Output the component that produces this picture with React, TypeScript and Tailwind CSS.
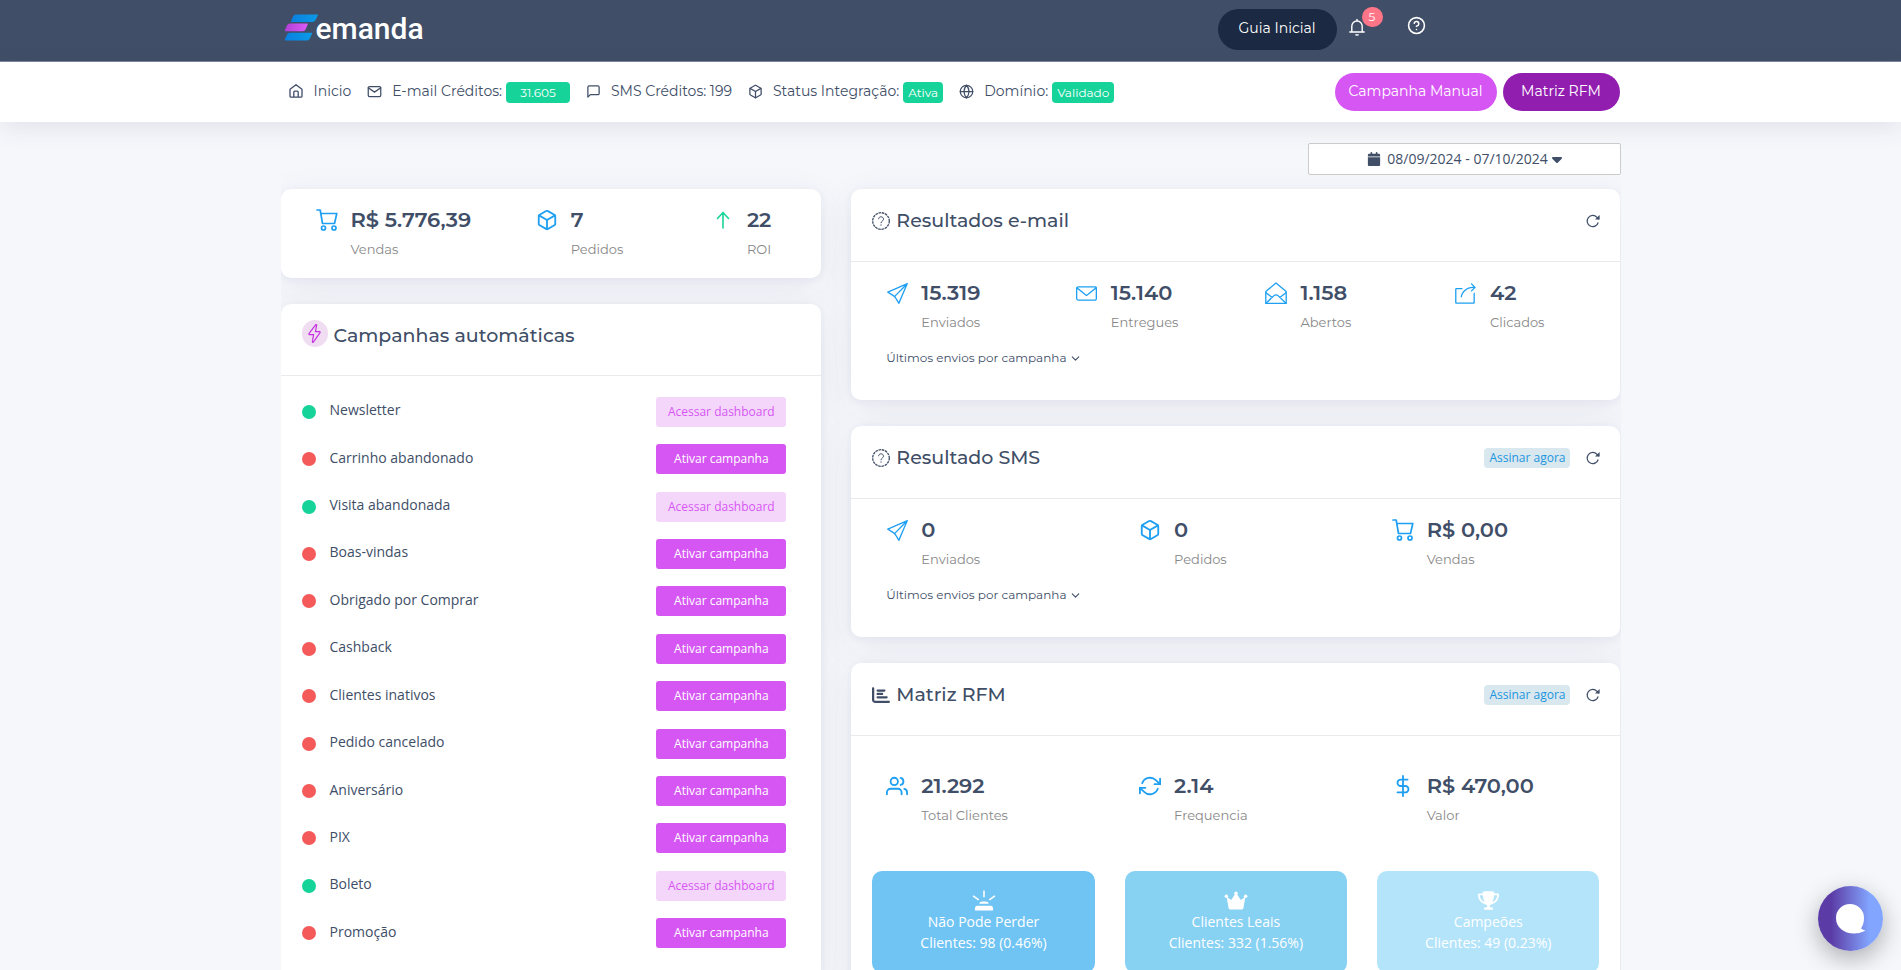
import type { ReactNode } from "react"
import { FiBox, FiChevronDown, FiDollarSign, FiGlobe, FiHelpCircle, FiHome, FiMail, FiMessageSquare, FiRefreshCw, FiUsers } from "react-icons/fi"
import { SlEnergy, SlEnvolope, SlPaperPlane, SlShareAlt } from "react-icons/sl"
import { FaCalendar, FaCaretDown, FaChartBar, FaTrophy } from "react-icons/fa6"

type Campaign = { name: string; active: boolean }

const campaigns: Campaign[] = [
  { name: "Newsletter", active: true },
  { name: "Carrinho abandonado", active: false },
  { name: "Visita abandonada", active: true },
  { name: "Boas-vindas", active: false },
  { name: "Obrigado por Comprar", active: false },
  { name: "Cashback", active: false },
  { name: "Clientes inativos", active: false },
  { name: "Pedido cancelado", active: false },
  { name: "Aniversário", active: false },
  { name: "PIX", active: false },
  { name: "Boleto", active: true },
  { name: "Promoção", active: false },
]

function Logo() {
  return (
    <a href="#" className="flex items-center text-white" aria-label="emanda">
      <svg width="34" height="28" viewBox="0 0 34 28">
        <defs>
          <linearGradient id="logo-blue" x1="0" x2="1">
            <stop offset="0" stopColor="#0a7fe0" />
            <stop offset="1" stopColor="#0b9be6" />
          </linearGradient>
          <linearGradient id="logo-pink" x1="0" x2="1">
            <stop offset="0" stopColor="#b03fd6" />
            <stop offset="1" stopColor="#dc5cf8" />
          </linearGradient>
        </defs>
        <path d="M12 0.5h21.5c.5 0 .6.4.4.8l-2.200 4.500Q30.600 8 28.400 8H7.500c-.5 0-.7-.3-.5-.8L9 2.600Q9.900.5 12 .5z" fill="url(#logo-blue)" />
        <path d="M6 9.500h17.200c.6 0 .8.3.6.8l-2 4.700q-1 2.200-3 2.200H1.300c-.5 0-.7-.3-.5-.8l2-4.600Q3.800 9.500 6 9.500z" fill="url(#logo-pink)" />
        <path d="M6 18.700h21.600c.5 0 .7.300.5.8l-2 4.500q-1.100 2.500-3.200 2.500H1.300c-.5 0-.7-.3-.5-.8l2-4.700q1-2.300 3.200-2.300z" fill="url(#logo-blue)" />
      </svg>
      <span className="-ml-[2px] pt-[2px] font-[Roboto,sans-serif] text-[30px] leading-7 font-medium">emanda</span>
    </a>
  )
}

function BellIcon() {
  return (
    <svg width="16" height="17" viewBox="0 0 16 17" fill="none" stroke="currentColor" strokeWidth="1.400">
      <path d="M8 0v2M2.800 13V7.200a5.200 5.200 0 0 1 10.400 0V13M.3 13h15.400" />
      <path d="M6 15.200a2 1.500 0 0 0 4 0z" fill="currentColor" stroke="none" />
    </svg>
  )
}

function HomeIcon() {
  return (
    <svg width="16" height="16" viewBox="0 0 16 16" fill="none" stroke="currentColor" strokeWidth="1.300" strokeLinejoin="round">
      <path d="M2 6.200 8 1.700l6 4.500v7q0 1-1 1H3q-1 0-1-1z" />
      <path d="M5.800 14V9.200q0-1 1-1h2.400q1 0 1 1V14" />
    </svg>
  )
}

function ReloadIcon() {
  return (
    <svg width="14" height="14" viewBox="0 0 14 14" fill="none" stroke="currentColor" strokeWidth="1.200">
      <path d="M12.200 8.500A5.600 5.600 0 1 1 11 3.300L13 5.200" />
      <path d="M13.600 1v4.600H9z" fill="currentColor" stroke="none" />
    </svg>
  )
}

function CartIcon() {
  return (
    <svg width="22" height="22" viewBox="0 0 22 22" fill="none" stroke="currentColor" strokeWidth="1.700" strokeLinejoin="round" strokeLinecap="round">
      <path d="M1 1h3.200l2.300 13.500h12L20.800 4.500H5" />
      <circle cx="7.500" cy="19" r="2" />
      <circle cx="18" cy="19" r="2" />
    </svg>
  )
}

function OpenEnvelopeIcon() {
  return (
    <svg width="22" height="22" viewBox="0 0 22 22" fill="none" stroke="currentColor" strokeWidth="1.300" strokeLinejoin="round">
      <path d="M.8 9.500 11 1l10.200 8.500v12H.8z" />
      <path d="m.8 10.500 6.400 5M21.200 10.500l-6.400 5M1 21.300 9 13.600q2-1.600 4 0l8 7.700" />
    </svg>
  )
}

function ArrowUpIcon() {
  return (
    <svg width="14" height="18" viewBox="0 0 14 18" fill="none" stroke="currentColor" strokeWidth="1.600" strokeLinecap="round" strokeLinejoin="round">
      <path d="M7 17V1.500M1.500 7.500 7 1.500l5.500 6" />
    </svg>
  )
}

function QuestionIcon() {
  return (
    <svg width="18" height="18" viewBox="0 0 18 18" fill="none" stroke="currentColor">
      <circle cx="9" cy="9" r="8.300" strokeWidth="1.300" strokeDasharray="2.600 0.700" />
      <path d="M6.600 7.200c0-3.200 4.900-3.200 4.900 0 0 1.800-2.500 1.800-2.500 4M9 12.400v1.300" strokeWidth="1" />
    </svg>
  )
}

function SirenIcon() {
  return (
    <svg width="24" height="21" viewBox="0 0 24 22" fill="currentColor">
      <path d="M2.500 21.500v-2q0-3 3-3h13q3 0 3 3v2zM7 14.500q.5-2.500 3-2.500h4q2.500 0 3 2.500z" />
      <path d="M12 1v6M1 6.500l5 3.500M23 6.500 18 10" stroke="currentColor" strokeWidth="1.600" strokeLinecap="round" />
    </svg>
  )
}

function CrownIcon() {
  return (
    <svg width="24" height="21" viewBox="0 0 24 22" fill="currentColor">
      <path d="M2.200 7.200 7 10.500 11.200 4h1.600L17 10.500l4.800-3.300-2 11.700q-.3 1.600-1.900 1.600H6.100q-1.600 0-1.900-1.600z" />
      <circle cx="12" cy="3.500" r="1.800" />
      <circle cx="1.900" cy="6.500" r="1.800" />
      <circle cx="22.100" cy="6.500" r="1.800" />
    </svg>
  )
}

function NavItem({ icon, label, badge, wide }: { icon: ReactNode; label: string; badge?: string; wide?: boolean }) {
  return (
    <a href="#" className="flex items-center">
      <span className="mr-[10px]">{icon}</span>
      <span>{label}</span>
      {badge ? (
        <span className={`mt-[3px] ml-1 rounded bg-[#16d39a] text-center text-xs leading-[21px] text-white ${wide ? "w-16" : "px-[5px]"}`}>
          {badge}
        </span>
      ) : null}
    </a>
  )
}

function Card({ children }: { children: ReactNode }) {
  return (
    <section className="mb-[26px] rounded-[10px] bg-white shadow-[0_10px_40px_rgba(62,57,107,0.07),0_2px_9px_rgba(62,57,107,0.06)]">
      {children}
    </section>
  )
}

function CardHeader({ icon, title, subscribe }: { icon: ReactNode; title: string; subscribe?: boolean }) {
  return (
    <header className="flex h-[73px] items-start border-b border-[#e9eaee] pt-5 pr-5 pl-[21px]">
      <h2 className="flex h-6 items-center gap-[6px] text-[19px] leading-6 font-medium">
        {icon}
        {title}
      </h2>
      <div className="ml-auto flex h-6 items-center gap-4">
        {subscribe ? (
          <a href="#" className="rounded bg-[#d9e7ee] px-[5px] font-['Open_Sans',sans-serif] text-xs leading-5 text-[#1b96e0]">
            Assinar agora
          </a>
        ) : null}
        <button type="button" aria-label="Atualizar">
          <ReloadIcon />
        </button>
      </div>
    </header>
  )
}

function Stat({ icon, value, label, color = "text-[#1e9ff2]" }: { icon: ReactNode; value: string; label: string; color?: string }) {
  return (
    <div className="flex">
      <span className={`mr-[13px] flex h-7 w-[22px] shrink-0 items-center justify-center ${color}`}>{icon}</span>
      <div>
        <p className="text-[21px] leading-7 font-semibold">{value}</p>
        <p className="mt-[5px] text-[13px] leading-5 text-[#888888]">{label}</p>
      </div>
    </div>
  )
}

function LastSends() {
  return (
    <button type="button" className="mt-4 ml-[35px] flex items-center gap-[3px] text-xs leading-5">
      Últimos envios por campanha
      <FiChevronDown size={13} />
    </button>
  )
}

function Tile({ icon, title, detail, color }: { icon: ReactNode; title: string; detail: string; color: string }) {
  return (
    <div className={`flex flex-col items-center rounded-[10px] pt-[19px] pb-5 font-['Open_Sans',sans-serif] text-sm leading-[21px] text-white ${color}`}>
      {icon}
      <p>{title}</p>
      <p>{detail}</p>
    </div>
  )
}

export default function App() {
  return (
    <div className="min-h-screen bg-[#f5f7fb] font-[Montserrat,Inter,sans-serif] text-[#404e67]">
      <div className="border-b border-[#7d86a5] bg-[#404e67]">
        <div className="mx-auto flex h-[61px] max-w-[1340px] items-start justify-between pl-[3px]">
          <div className="pt-[13px]">
            <Logo />
          </div>
          <div className="mr-[195px] flex items-start text-white">
            <button type="button" className="mt-[9px] rounded-[21px] bg-[#1b2942] px-[21px] pb-[2px] text-sm leading-[39px]">
              Guia Inicial
            </button>
            <button type="button" aria-label="Notificações" className="relative mt-[19px] ml-3">
              <BellIcon />
              <span className="absolute -top-3 left-[13px] h-5 w-[21px] rounded-full bg-[#ff7588] text-center text-xs leading-5">5</span>
            </button>
            <button type="button" aria-label="Ajuda" className="mt-4 ml-[42px]">
              <FiHelpCircle size={19} />
            </button>
          </div>
        </div>
      </div>

      <nav className="relative bg-white shadow-[0_6px_24px_rgba(62,57,80,0.1)]">
        <div className="mx-auto flex h-[60px] max-w-[1340px] items-center pr-px pl-[7px] text-sm">
          <div className="flex items-center gap-4 pb-[2px]">
            <NavItem icon={<HomeIcon />} label="Inicio" />
            <NavItem icon={<FiMail size={15} />} label="E-mail Créditos:" badge="31.605" wide />
            <NavItem icon={<FiMessageSquare size={15} />} label="SMS Créditos: 199" />
            <NavItem icon={<FiBox size={15} />} label="Status Integração:" badge="Ativa" />
            <NavItem icon={<FiGlobe size={15} />} label="Domínio:" badge="Validado" />
          </div>
          <div className="ml-auto flex gap-[6px] text-white">
            <button type="button" className="w-[162px] rounded-[19px] bg-[#d656f4] pb-[2px] leading-9">
              Campanha Manual
            </button>
            <button type="button" className="w-[117px] rounded-[19px] bg-[#921eb0] pb-[2px] leading-9">
              Matriz RFM
            </button>
          </div>
        </div>
      </nav>

      <main className="mx-auto max-w-[1340px] overflow-hidden pt-[21px]">
        <div className="mb-[14px] flex justify-end">
          <button
            type="button"
            className="flex h-8 w-[313px] items-center justify-center rounded-[2px] border border-[#cccccc] bg-white pl-1 font-['Open_Sans',sans-serif] text-sm"
          >
            <FaCalendar size={14} className="mr-[6px]" />
            08/09/2024 - 07/10/2024
            <FaCaretDown size={16} className="ml-px" />
          </button>
        </div>

        <div className="grid grid-cols-12 gap-x-[30px]">
          <div className="col-span-5">
            <Card>
              <div className="grid grid-cols-[5fr_4fr_auto] pt-[17px] pr-[50px] pb-[19px] pl-[35px]">
                <Stat icon={<CartIcon />} value="R$ 5.776,39" label="Vendas" />
                <Stat icon={<FiBox size={22} />} value="7" label="Pedidos" />
                <Stat icon={<ArrowUpIcon />} value="22" label="ROI" color="text-[#16d39a]" />
              </div>
            </Card>

            <Card>
              <header className="flex h-[72px] items-start gap-[6px] border-b border-[#e9eaee] px-[21px] pt-4">
                <span className="flex h-[27px] w-[26px] items-center justify-center rounded-full bg-[#f0ddf2] text-[#c52fe0]">
                  <SlEnergy size={19} />
                </span>
                <h2 className="mt-1 text-[19px] leading-6 font-medium">Campanhas automáticas</h2>
              </header>
              <ul className="grid min-h-[605px] auto-rows-fr pt-3 pr-[35px] pb-6 pl-[21px] font-['Open_Sans',sans-serif]">
                {campaigns.map((c) => (
                  <li key={c.name} className="flex items-center">
                    <span className={`h-[14px] w-[14px] rounded-full ${c.active ? "bg-[#16d39a]" : "bg-[#f55a5a]"}`} />
                    <span className="ml-[14px] pb-[3px] text-sm leading-5">{c.name}</span>
                    <button
                      type="button"
                      className={`ml-auto w-[130px] rounded-[3px] text-xs leading-[30px] ${
                        c.active ? "bg-[#f5d6fb] text-[#d656f4]" : "bg-[#d656f4] text-white"
                      }`}
                    >
                      {c.active ? "Acessar dashboard" : "Ativar campanha"}
                    </button>
                  </li>
                ))}
              </ul>
            </Card>
          </div>

          <div className="col-span-7">
            <Card>
              <CardHeader icon={<QuestionIcon />} title="Resultados e-mail" />
              <div className="pt-[17px] pb-8">
                <div className="-mr-6 grid grid-cols-4 pl-[35px]">
                  <Stat icon={<SlPaperPlane size={21} />} value="15.319" label="Enviados" />
                  <Stat icon={<SlEnvolope size={21} />} value="15.140" label="Entregues" />
                  <Stat icon={<OpenEnvelopeIcon />} value="1.158" label="Abertos" />
                  <Stat icon={<SlShareAlt size={21} />} value="42" label="Clicados" />
                </div>
                <LastSends />
              </div>
            </Card>

            <Card>
              <CardHeader icon={<QuestionIcon />} title="Resultado SMS" subscribe />
              <div className="pt-[17px] pb-8">
                <div className="-mr-6 grid grid-cols-3 pl-[35px]">
                  <Stat icon={<SlPaperPlane size={21} />} value="0" label="Enviados" />
                  <Stat icon={<FiBox size={22} />} value="0" label="Pedidos" />
                  <Stat icon={<CartIcon />} value="R$ 0,00" label="Vendas" />
                </div>
                <LastSends />
              </div>
            </Card>

            <Card>
              <CardHeader icon={<FaChartBar size={18} />} title="Matriz RFM" subscribe />
              <div className="pt-9 pb-8">
                <div className="-mr-6 grid grid-cols-3 pl-[35px]">
                  <Stat icon={<FiUsers size={22} />} value="21.292" label="Total Clientes" />
                  <Stat icon={<FiRefreshCw size={22} />} value="2.14" label="Frequencia" />
                  <Stat icon={<FiDollarSign size={22} />} value="R$ 470,00" label="Valor" />
                </div>
                <div className="mt-[46px] grid grid-cols-3 gap-[30px] px-[21px]">
                  <Tile icon={<SirenIcon />} title="Não Pode Perder" detail="Clientes: 98 (0.46%)" color="bg-[#70c4f3]" />
                  <Tile icon={<CrownIcon />} title="Clientes Leais" detail="Clientes: 332 (1.56%)" color="bg-[#87d1f3]" />
                  <Tile icon={<FaTrophy size={21} />} title="Campeões" detail="Clientes: 49 (0.23%)" color="bg-[#b3e4fa]" />
                </div>
              </div>
            </Card>
          </div>
        </div>
      </main>

      <button
        type="button"
        aria-label="Abrir chat"
        className="fixed right-[18px] bottom-[19px] flex h-[65px] w-[65px] items-center justify-center rounded-full bg-linear-to-r from-[#5b3ba6] from-20% to-[#82a6ff] to-80% shadow-[0_8px_24px_rgba(0,0,0,0.3)]"
      >
        <svg width="30" height="30" viewBox="0 0 30 30" fill="white">
          <path d="M14 0a14 14 0 0 1 14 14q0 6-3 10.500 2 1.500 4.500 2.300Q24 29.500 18 29.500C8 29.500 0 23.500 0 14A14 14 0 0 1 14 0z" />
        </svg>
      </button>
    </div>
  )
}
